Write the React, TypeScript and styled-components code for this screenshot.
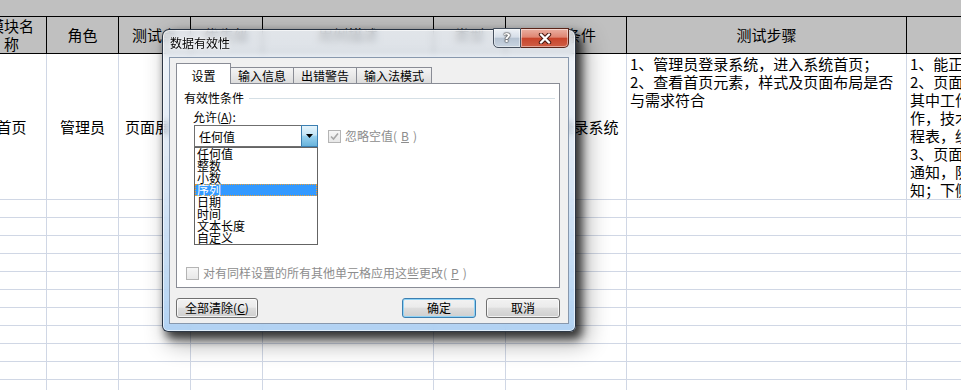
import React from "react";
import styled, { createGlobalStyle } from "styled-components";

const GlobalStyle = createGlobalStyle`
  html, body {
    margin: 0;
    padding: 0;
  }
  body {
    width: 961px;
    height: 390px;
    overflow: hidden;
    background: #fff;
    font-family: "Noto Sans CJK SC", "Noto Sans", sans-serif;
  }
`;

const Screen = styled.div`
  position: relative;
  width: 961px;
  height: 390px;
  overflow: hidden;
  background: #fff;
`;

// spreadsheet behind the dialog
const TopBand = styled.div`
  height: 16px;
  background: #c0c0c0;
`;

const Sheet = styled.table`
  border-collapse: collapse;
  table-layout: fixed;
  width: 1200px;
  margin-left: -24px;
  font-size: 15px;
  line-height: 18px;
  color: #000;
`;

const HeadCell = styled.th`
  height: 36px;
  padding: 0 6px;
  background: #c0c0c0;
  border: 1px solid #000;
  font-weight: normal;
  text-align: center;
  vertical-align: middle;
  overflow: hidden;
`;

const Cell = styled.td<{ $top?: boolean; $h: number }>`
  height: ${(p) => p.$h}px;
  padding: ${(p) => (p.$top ? "1px 3px 0" : "0 6px")};
  border: 1px solid #d0d7e5;
  text-align: ${(p) => (p.$top ? "left" : "center")};
  vertical-align: ${(p) => (p.$top ? "top" : "middle")};
  white-space: ${(p) => (p.$top ? "normal" : "nowrap")};
  overflow: hidden;
`;

const Line = styled.div`
  white-space: nowrap;
`;

// dialog window
const Dialog = styled.div`
  position: absolute;
  left: 162px;
  top: 29px;
  width: 414px;
  height: 303px;
  box-sizing: border-box;
  display: flex;
  flex-direction: column;
  padding: 0 6px 7px 6px;
  border: 1px solid rgba(25, 35, 50, 0.9);
  border-radius: 7px 7px 6px 6px;
  background: linear-gradient(
    180deg,
    rgba(236, 241, 247, 0.74) 0%,
    rgba(214, 227, 242, 0.74) 40%,
    rgba(160, 200, 240, 0.8) 100%
  );
  backdrop-filter: blur(3px);
  box-shadow: inset 0 0 0 1px rgba(255, 255, 255, 0.6),
    5px 6px 10px 1px rgba(0, 0, 0, 0.72), 8px 9px 22px 4px rgba(0, 0, 0, 0.3);
  font-size: 12px;
  line-height: 14px;
  color: #000;
`;

const TitleBar = styled.div`
  display: flex;
  align-items: flex-start;
  height: 27px;
`;

const Title = styled.div`
  flex: 1;
  padding: 6px 0 0 1px;
  text-shadow: 0 0 6px rgba(255, 255, 255, 0.95), 0 0 2px #fff;
`;

const CaptionGroup = styled.div`
  display: flex;
  margin-top: -2px;
`;

const CaptionButton = styled.div<{ $close?: boolean }>`
  display: flex;
  align-items: center;
  justify-content: center;
  box-sizing: border-box;
  width: ${(p) => (p.$close ? 48 : 28)}px;
  height: 20px;
  border: 1px solid ${(p) => (p.$close ? "#5a2418" : "#46505e")};
  border-left-width: ${(p) => (p.$close ? 0 : 1)}px;
  border-radius: ${(p) => (p.$close ? "0 0 5px 0" : "0 0 0 5px")};
  background: ${(p) =>
    p.$close
      ? "linear-gradient(180deg, #eab0a2 0%, #df8673 45%, #c8452c 52%, #cf5e45 100%)"
      : "linear-gradient(180deg, #eef2f6 0%, #d6dee8 45%, #b6c3d2 52%, #c9d4e0 100%)"};
  box-shadow: inset 0 0 0 1px rgba(255, 255, 255, 0.45);
  color: #fff;
  font-family: "DejaVu Sans", sans-serif;
  font-weight: bold;
  font-size: 13px;
  text-shadow: 0 0 1px #222, 0 0 1px #222, 0 0 2px #333;
`;

const Client = styled.div`
  flex: 1;
  display: flex;
  flex-direction: column;
  box-sizing: border-box;
  padding: 5px 8px 5px 6px;
  background: #f0f0f0;
  border: 1px solid #8898ad;
`;

const TabRow = styled.div`
  display: flex;
  align-items: flex-end;
  height: 20px;
`;

const Tab = styled.div<{ $active?: boolean }>`
  position: relative;
  z-index: ${(p) => (p.$active ? 1 : 0)};
  box-sizing: border-box;
  height: ${(p) => (p.$active ? 21 : 16)}px;
  width: ${(p) => (p.$active ? "55px" : "auto")};
  margin-bottom: ${(p) => (p.$active ? -1 : 0)}px;
  margin-left: ${(p) => (p.$active ? 0 : -1)}px;
  padding: ${(p) => (p.$active ? "5px 0 0" : "1px 7px 0")};
  text-align: center;
  border: 1px solid #898c95;
  border-bottom: none;
  background: ${(p) =>
    p.$active ? "#fff" : "linear-gradient(180deg, #f4f4f4 0%, #e9e9e9 50%, #dcdcdc 100%)"};
`;

const Panel = styled.div`
  display: flex;
  flex-direction: column;
  box-sizing: border-box;
  height: 205px;
  padding: 7px 4px 7px 7px;
  background: #fff;
  border: 1px solid #898c95;
`;

const GroupHeader = styled.div`
  display: flex;
  align-items: center;
  gap: 5px;
`;

const GroupRule = styled.div`
  flex: 1;
  height: 1px;
  background: #d5dfe5;
`;

const FieldLabel = styled.div`
  margin: 5px 0 0 9px;
`;

const ComboRow = styled.div`
  display: flex;
  align-items: center;
  margin: 1px 0 0 10px;
`;

const Combo = styled.div`
  position: relative;
  display: flex;
  box-sizing: border-box;
  width: 124px;
  height: 22px;
  border: 1px solid #6f6f6f;
  background: #fff;
`;

const ComboValue = styled.div`
  flex: 1;
  padding: 4px 0 0 4px;
`;

const ComboButton = styled.div`
  display: flex;
  align-items: center;
  justify-content: center;
  box-sizing: border-box;
  width: 17px;
  margin: -1px -1px -1px 0;
  border: 1px solid #3c7fb1;
  background: linear-gradient(180deg, #e5f4fc 0%, #c4e5f6 45%, #98d1ef 52%, #68b3db 100%);
`;

const DropList = styled.div`
  position: absolute;
  left: -1px;
  top: 21px;
  width: 124px;
  box-sizing: border-box;
  border: 1px solid #646464;
  background: #fff;
  z-index: 2;
`;

const DropItem = styled.div<{ $selected?: boolean }>`
  box-sizing: border-box;
  height: 12px;
  padding-left: ${(p) => (p.$selected ? 1 : 2)}px;
  font-size: 12px;
  color: ${(p) => (p.$selected ? "#fff" : "#000")};
  background: ${(p) => (p.$selected ? "#3399ff" : "transparent")};
  border: ${(p) => (p.$selected ? "1px dotted #f0a030" : "none")};
  line-height: ${(p) => (p.$selected ? 10 : 12)}px;
`;

const CheckRow = styled.label<{ $bottom?: boolean }>`
  display: flex;
  align-items: center;
  gap: 4px;
  margin: ${(p) => (p.$bottom ? "auto 0 0 2px" : "0 0 0 10px")};
  color: #8d8d8d;
`;

const Box = styled.span`
  display: flex;
  align-items: center;
  justify-content: center;
  box-sizing: border-box;
  width: 13px;
  height: 13px;
  border: 1px solid #b4b4b4;
  background: linear-gradient(180deg, #f6f6f6 0%, #e8e8e8 100%);
`;

const ButtonRow = styled.div`
  display: flex;
  gap: 10px;
  margin-top: 10px;
`;

const Spacer = styled.div`
  flex: 1;
`;

const Button = styled.div<{ $w: number; $default?: boolean }>`
  box-sizing: border-box;
  width: ${(p) => p.$w}px;
  height: 20px;
  line-height: 18px;
  text-align: center;
  border: 1px solid ${(p) => (p.$default ? "#3c7fb1" : "#707070")};
  border-radius: 3px;
  background: linear-gradient(180deg, #f2f2f2 0%, #ebebeb 45%, #dddddd 52%, #cfcfcf 100%);
  box-shadow: inset 0 0 0 1px ${(p) => (p.$default ? "#8fd3f6" : "rgba(255,255,255,0.75)")};
`;

const headers = ["模块名称", "角色", "测试点", "优先级", "用例描述", "类型", "预置条件", "测试步骤", "预期结果"];
const widths = [70, 72, 72, 72, 171, 72, 121, 280, 270];

const expected = [
  "1、能正常进入系统首页；",
  "2、页面显示工作台模块，",
  "其中工作台包含我的工",
  "作，技术支持，我的日",
  "程表，绩效考核等模块；",
  "3、页面右侧显示系统",
  "通知，防疫通知等各类通",
  "知；下侧显示版权信息",
];

const options = ["任何值", "整数", "小数", "序列", "日期", "时间", "文本长度", "自定义"];

const CloseIcon = () => (
  <svg width="14" height="11" viewBox="0 0 14 11">
    <path d="M3 1.5 L11 9.5 M11 1.5 L3 9.5" stroke="#4a1a12" strokeWidth="4.4" strokeLinecap="round" />
    <path d="M3 1.5 L11 9.5 M11 1.5 L3 9.5" stroke="#fff" strokeWidth="2.4" strokeLinecap="round" />
  </svg>
);

const Check = () => (
  <svg width="9" height="9" viewBox="0 0 9 9">
    <path d="M1 4.5 L3.5 7 L8 1.5" fill="none" stroke="#a6a6a6" strokeWidth="1.6" />
  </svg>
);

const Arrow = () => (
  <svg width="7" height="4" viewBox="0 0 7 4">
    <polygon points="0,0 7,0 3.5,4" fill="#000" />
  </svg>
);

const Spreadsheet = () => (
  <>
    <TopBand />
    <Sheet>
      <colgroup>
        {widths.map((w, i) => (
          <col key={i} style={{ width: w }} />
        ))}
      </colgroup>
      <thead>
        <tr>
          {headers.map((h) => (
            <HeadCell key={h}>{h}</HeadCell>
          ))}
        </tr>
      </thead>
      <tbody>
        <tr>
          <Cell $h={143}>首页</Cell>
          <Cell $h={143}>管理员</Cell>
          <Cell $h={143}>页面展示</Cell>
          <Cell $h={143}>高</Cell>
          <Cell $h={143}>验证首页展示</Cell>
          <Cell $h={143}>功能</Cell>
          <Cell $h={143}>管理员登录系统</Cell>
          <Cell $h={143} $top>
            1、管理员登录系统，进入系统首页；
            <br />
            2、查看首页元素，样式及页面布局是否与需求符合
          </Cell>
          <Cell $h={143} $top>
            {expected.map((l) => (
              <Line key={l}>{l}</Line>
            ))}
          </Cell>
        </tr>
        {Array.from({ length: 11 }).map((_, r) => (
          <tr key={r}>
            {widths.map((_, c) => (
              <Cell key={c} $h={17} />
            ))}
          </tr>
        ))}
      </tbody>
    </Sheet>
  </>
);

const ValidationDialog = () => (
  <Dialog>
    <TitleBar>
      <Title>数据有效性</Title>
      <CaptionGroup>
        <CaptionButton>?</CaptionButton>
        <CaptionButton $close>
          <CloseIcon />
        </CaptionButton>
      </CaptionGroup>
    </TitleBar>
    <Client>
      <TabRow>
        <Tab $active>设置</Tab>
        <Tab>输入信息</Tab>
        <Tab>出错警告</Tab>
        <Tab>输入法模式</Tab>
      </TabRow>
      <Panel>
        <GroupHeader>
          有效性条件
          <GroupRule />
        </GroupHeader>
        <FieldLabel>
          允许(<u>A</u>):
        </FieldLabel>
        <ComboRow>
          <Combo>
            <ComboValue>任何值</ComboValue>
            <ComboButton>
              <Arrow />
            </ComboButton>
            <DropList>
              {options.map((o) => (
                <DropItem key={o} $selected={o === "序列"}>
                  {o}
                </DropItem>
              ))}
            </DropList>
          </Combo>
          <CheckRow>
            <Box>
              <Check />
            </Box>
            忽略空值(<u>B</u>)
          </CheckRow>
        </ComboRow>
        <CheckRow $bottom>
          <Box />
          对有同样设置的所有其他单元格应用这些更改(<u>P</u>)
        </CheckRow>
      </Panel>
      <ButtonRow>
        <Button $w={82}>
          全部清除(<u>C</u>)
        </Button>
        <Spacer />
        <Button $w={74} $default>
          确定
        </Button>
        <Button $w={74}>取消</Button>
      </ButtonRow>
    </Client>
  </Dialog>
);

const App = () => (
  <Screen>
    <GlobalStyle />
    <Spreadsheet />
    <ValidationDialog />
  </Screen>
);

export default App;
